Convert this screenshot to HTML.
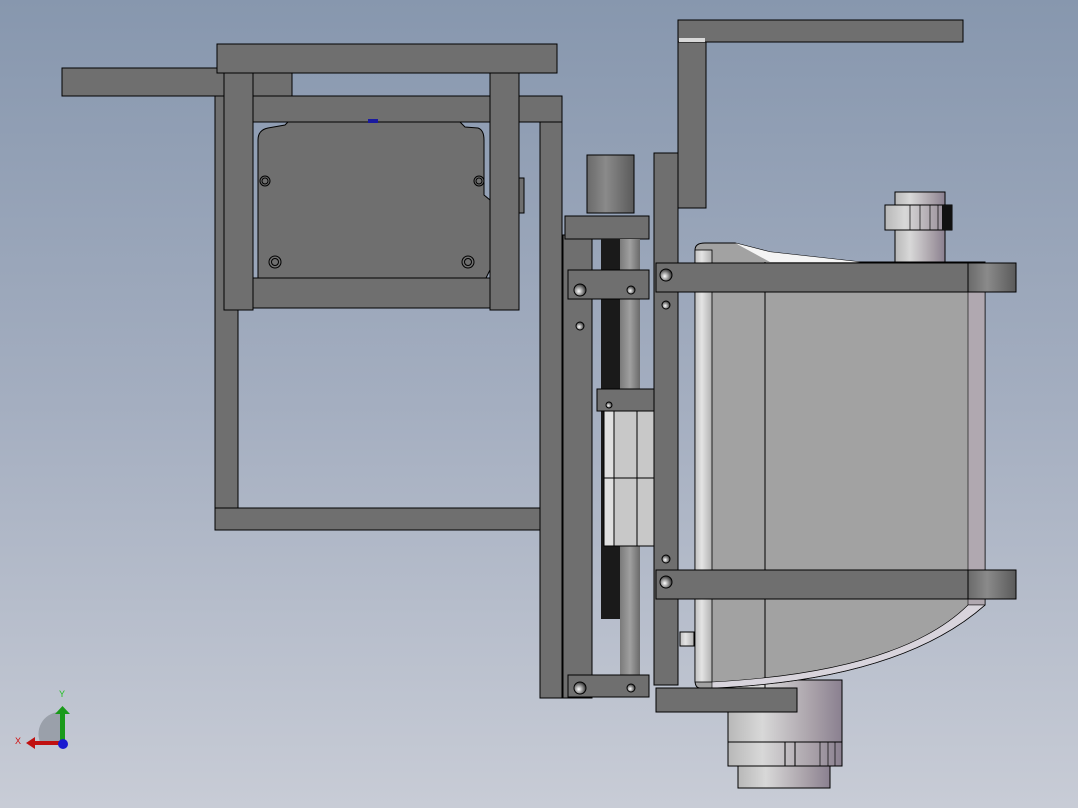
<!DOCTYPE html>
<html><head><meta charset="utf-8"><style>
html,body{margin:0;padding:0;width:1078px;height:808px;overflow:hidden}
svg{display:block}
</style></head><body>
<svg width="1078" height="808" viewBox="0 0 1078 808" xmlns="http://www.w3.org/2000/svg">
<defs>
<linearGradient id="bg" x1="0" y1="0" x2="0" y2="1">
<stop offset="0" stop-color="#8797ae"/><stop offset="0.5" stop-color="#a4aec0"/><stop offset="1" stop-color="#c8ccd6"/>
</linearGradient>
<linearGradient id="cyl" x1="0" y1="0" x2="1" y2="0">
<stop offset="0" stop-color="#b8b8b8"/><stop offset="0.3" stop-color="#d8d8d8"/><stop offset="0.75" stop-color="#a8a0a8"/><stop offset="1" stop-color="#8a8090"/>
</linearGradient>
<linearGradient id="cyl2" x1="0" y1="0" x2="1" y2="0">
<stop offset="0" stop-color="#6a6a6a"/><stop offset="0.4" stop-color="#8a8a8a"/><stop offset="1" stop-color="#5a5a5a"/>
</linearGradient>
<linearGradient id="rail" x1="0" y1="0" x2="1" y2="0">
<stop offset="0" stop-color="#c0c0c0"/><stop offset="0.4" stop-color="#e4e4e4"/><stop offset="1" stop-color="#b0b0b0"/>
</linearGradient>
<linearGradient id="rod" x1="0" y1="0" x2="1" y2="0">
<stop offset="0" stop-color="#7a7a7a"/><stop offset="0.5" stop-color="#a0a0a0"/><stop offset="1" stop-color="#6a6a6a"/>
</linearGradient>
<radialGradient id="hole" cx="0.4" cy="0.6" r="0.6"><stop offset="0" stop-color="#ffffff"/><stop offset="1" stop-color="#333"/></radialGradient>
</defs>
<rect width="1078" height="808" fill="url(#bg)"/>
<g stroke="#000" stroke-width="1" fill="#6f6f6f">
<rect x="62" y="68" width="230" height="28"/>
<rect x="215" y="96" width="23" height="412"/>
<rect x="215" y="508" width="325" height="22"/>
<rect x="253" y="96" width="309" height="26"/>
<rect x="540" y="122" width="22" height="576"/>
<path d="M258 140 Q258 130 268 128 L285 125 L288 122 L460 122 L465 127 L478 128 Q484 130 484 140 L484 195 L490 200 L490 270 L486 278 L258 278 Z"/>
<rect x="253" y="278" width="237" height="30"/>
<rect x="217" y="44" width="340" height="29"/>
<rect x="224" y="73" width="29" height="237"/>
<rect x="490" y="73" width="29" height="237"/>
<rect x="519" y="178" width="5" height="35"/>
</g>
<rect x="368" y="119" width="10" height="4" fill="#1a1aa0"/>
<g fill="none" stroke="#000">
<circle cx="265" cy="181" r="5"/><circle cx="265" cy="181" r="3"/>
<circle cx="479" cy="181" r="5"/><circle cx="479" cy="181" r="3"/>
<circle cx="275" cy="262" r="6"/><circle cx="275" cy="262" r="3.5"/>
<circle cx="468" cy="262" r="6"/><circle cx="468" cy="262" r="3.5"/>
</g>
<rect x="587" y="155" width="47" height="58" fill="url(#cyl2)" stroke="#000"/>
<g stroke="#000" fill="#6f6f6f">
<rect x="563" y="235" width="29" height="463"/>
<rect x="565" y="216" width="84" height="23"/>
</g>
<rect x="601" y="239" width="20" height="380" fill="#1a1a1a"/>
<rect x="620" y="239" width="20" height="437" fill="url(#rod)"/>
<g stroke="#000" fill="#6f6f6f">
<rect x="568" y="270" width="81" height="29"/>
<rect x="568" y="675" width="81" height="22"/>
<rect x="597" y="389" width="57" height="22"/>
</g>
<rect x="604" y="411" width="50" height="135" fill="#c8c8c8" stroke="#000"/>
<rect x="604" y="411" width="10" height="135" fill="#e0e0e0" stroke="#000"/>
<line x1="604" y1="478" x2="654" y2="478" stroke="#000"/>
<line x1="637" y1="411" x2="637" y2="546" stroke="#000"/>
<g stroke="#000" fill="#6f6f6f">
<rect x="654" y="153" width="24" height="532"/>
<rect x="678" y="38" width="28" height="170"/>
<rect x="678" y="20" width="285" height="22"/>
</g>
<rect x="679" y="38" width="26" height="4" fill="#d8d8d8"/>
<!-- knob -->
<rect x="895" y="192" width="50" height="70" fill="url(#cyl)" stroke="#000"/>
<rect x="885" y="205" width="67" height="25" fill="url(#cyl)" stroke="#000"/>
<g stroke="#000" stroke-width="0.7"><line x1="910" y1="205" x2="910" y2="230"/><line x1="920" y1="205" x2="920" y2="230"/><line x1="930" y1="205" x2="930" y2="230"/><line x1="938" y1="205" x2="938" y2="230"/></g>
<rect x="942" y="205" width="10" height="25" fill="#111"/>
<!-- bottom cylinder -->
<rect x="738" y="760" width="92" height="28" fill="url(#cyl)" stroke="#000"/>
<rect x="728" y="680" width="114" height="62" fill="url(#cyl)" stroke="#000"/>
<rect x="728" y="742" width="114" height="24" fill="url(#cyl)" stroke="#000"/>
<rect x="785" y="742" width="10" height="24" fill="none" stroke="#000"/>
<g stroke="#000" stroke-width="0.7"><line x1="820" y1="742" x2="820" y2="766"/><line x1="828" y1="742" x2="828" y2="766"/><line x1="835" y1="742" x2="835" y2="766"/></g>
<!-- device -->
<path d="M695 250 Q695 243 705 243 L735 243 L770 252 L860 262 L985 262 L985 605 Q900 680 712 688 L700 688 Q695 688 695 680 Z" fill="#a2a2a2" stroke="#000"/>
<rect x="695" y="250" width="17" height="432" fill="url(#rail)" stroke="#000" stroke-width="0.8"/>
<line x1="765" y1="262" x2="765" y2="688" stroke="#000"/>
<rect x="968" y="290" width="17" height="315" fill="#b0a8b0" stroke="#000" stroke-width="0.6"/>
<path d="M735 243 L770 252 L860 262 L770 262 Z" fill="#f4f4f4"/>
<path d="M985 605 Q900 680 712 688 L712 682 Q900 672 968 605 Z" fill="#d8d4dc" stroke="#000" stroke-width="0.6"/>
<rect x="680" y="632" width="14" height="14" fill="url(#rail)" stroke="#000"/>
<g stroke="#000" fill="#6f6f6f">
<rect x="656" y="263" width="360" height="29"/>
<rect x="656" y="570" width="360" height="29"/>
<rect x="656" y="688" width="141" height="24"/>
</g>
<rect x="968" y="263" width="48" height="29" fill="url(#cyl2)" stroke="#000"/>
<rect x="968" y="570" width="48" height="29" fill="url(#cyl2)" stroke="#000"/>
<g stroke="#000" fill="url(#hole)">
<circle cx="580" cy="290" r="6"/><circle cx="631" cy="290" r="4"/>
<circle cx="580" cy="326" r="4"/>
<circle cx="580" cy="688" r="6"/><circle cx="631" cy="688" r="4"/>
<circle cx="666" cy="275" r="6"/><circle cx="666" cy="305" r="4"/>
<circle cx="666" cy="582" r="6"/><circle cx="666" cy="559" r="4"/>
<circle cx="609" cy="405" r="3"/>
</g>
<path d="M40 742 A22 22 0 0 1 62 712 L62 742 Z" fill="#9aa0aa"/>
<rect x="60" y="712" width="5" height="30" fill="#1a9a1a"/>
<path d="M55 714 L62.5 706 L70 714 Z" fill="#1a9a1a"/>
<rect x="34" y="741" width="28" height="4" fill="#c01010"/>
<path d="M35 737 L26 743 L35 749 Z" fill="#c01010"/>
<circle cx="63" cy="744" r="5" fill="#1a1ad0"/>
<text x="59" y="697" font-family="Liberation Sans, sans-serif" font-size="9" fill="#20c020">Y</text>
<text x="15" y="744" font-family="Liberation Sans, sans-serif" font-size="9" fill="#d01010">X</text>
</svg>
</body></html>
